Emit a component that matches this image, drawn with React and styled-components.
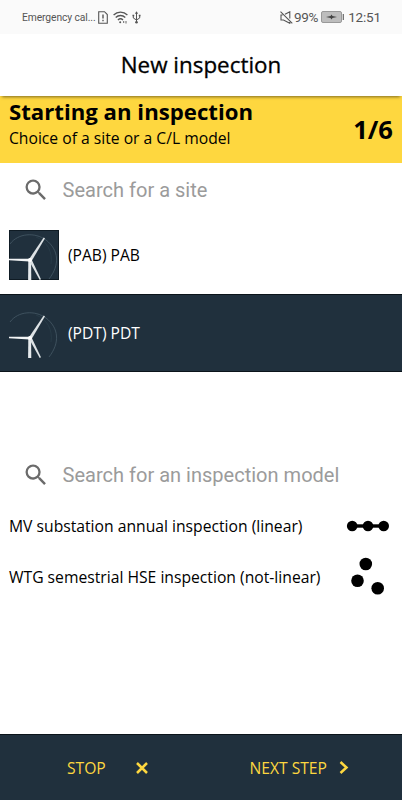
import React from 'react';
import styled, { createGlobalStyle } from 'styled-components';

const sites = [
    { label: '(PAB) PAB', selected: false },
    { label: '(PDT) PDT', selected: true },
];

const SearchIcon = () => (
    <svg width="28" height="28" viewBox="0 0 24 24" fill="#6b6b6b">
        <path d="M15.5 14h-.79l-.28-.27A6.47 6.47 0 0 0 16 9.5 6.5 6.5 0 1 0 9.5 16c1.61 0 3.09-.59 4.23-1.57l.27.28v.79l5 4.99L20.49 19l-4.99-5zm-6 0C7.01 14 5 11.99 5 9.5S7.01 5 9.5 5 14 7.01 14 9.5 11.99 14 9.5 14z" />
    </svg>
);

const Turbine = () => (
    <svg width="50" height="50" viewBox="0 0 50 50">
        <path d="M1 14C9 3 26 2 37 10C50 20 51 35 40 49" fill="none" stroke="#4b5e6b" strokeWidth="0.7" />
        <path d="M27 7C38 11 44 22 42 34" fill="none" stroke="#2c414e" strokeWidth="0.6" />
        <path d="M19.300 31h2.800l.2 19h-3.200z" fill="#e6eaed" />
        <path d="M19.800 29.500L34.700 7.500L36 8.200L22.800 30.800z" fill="#dde2e5" />
        <path d="M21 28.700L0 28.800V30.200L20.500 31.500z" fill="#f2f4f5" />
        <path d="M20.200 31L22.600 29.500L32 49.200L30.700 50z" fill="#dde2e5" />
        <circle cx="21" cy="30" r="2" fill="#fff" />
    </svg>
);

const App = () => {
    return (
        <Screen>
            <GlobalStyle />
            <StatusBar>
                <Carrier>Emergency cal...</Carrier>
                <StatusIcons>
                    <svg width="10" height="13" viewBox="0 0 10 13" fill="none" stroke="#555" strokeWidth="1.1">
                        <path d="M.7.700H6.500L9.300 3.500V12.200H.7z" />
                        <path d="M5 3.500V7.600M5 8.800V10.200" strokeWidth="1.4" />
                    </svg>
                    <svg width="15" height="13" viewBox="0 0 15 13" fill="none" stroke="#555" strokeWidth="1.3">
                        <path d="M.6 4C4.500.2 10.500.2 14.400 4M2.700 6.500C5.500 3.800 9.500 3.800 12.300 6.500M4.900 8.900C6.500 7.500 8.500 7.500 10 8.900" />
                        <circle cx="7.200" cy="11.300" r="1" fill="#555" stroke="none" />
                        <path d="M10.700 10V12M13 10V12.500" strokeWidth="0.9" />
                    </svg>
                    <svg width="9" height="13" viewBox="0 0 9 13" fill="none" stroke="#555" strokeWidth="1">
                        <path d="M4.500 2V11M1.300 4.500V7L4.500 9L7.700 7V4.500" />
                        <path d="M2.900 2.700L4.500.3L6.100 2.700z" fill="#555" stroke="none" />
                        <circle cx="4.500" cy="11.300" r="1.300" fill="#555" stroke="none" />
                        <path d="M.5 4.500H2.200M6.800 4.500H8.500" strokeWidth="1.500" />
                    </svg>
                </StatusIcons>
                <StatusRight>
                    <svg width="13" height="13" viewBox="0 0 13 13" fill="none" stroke="#555" strokeWidth="1.1">
                        <path d="M2.600 4H1V9H3.500L9.800 12.300V9.800M5 3.300L9.800.8V7.500M.5.700L12.300 12.400" />
                    </svg>
                    <Percent>99%</Percent>
                    <svg width="23" height="12" viewBox="0 0 23 12">
                        <rect x=".5" y=".5" width="20" height="11" rx="1.500" fill="#bdbdbd" stroke="#999" />
                        <path d="M22.300 3V9" stroke="#666" strokeWidth="1.200" />
                        <path d="M5 6L9.500 5L10.500 3.500L11.500 5L16 6L11.500 7L10.500 8.500L9.500 7z" fill="#444" />
                    </svg>
                    <Clock>12:51</Clock>
                </StatusRight>
            </StatusBar>
            <Header>New inspection</Header>
            <StepBanner>
                <div>
                    <h2>Starting an inspection</h2>
                    <p>Choice of a site or a C/L model</p>
                </div>
                <Progress>1/6</Progress>
            </StepBanner>
            <Search>
                <SearchIcon />
                <input placeholder="Search for a site" />
            </Search>
            <SiteList>
                {sites.map((site) => (
                    <Site key={site.label} $selected={site.selected}>
                        <Thumb $selected={site.selected}><Turbine /></Thumb>
                        <span>{site.label}</span>
                    </Site>
                ))}
            </SiteList>
            <Search $compact>
                <SearchIcon />
                <input placeholder="Search for an inspection model" />
            </Search>
            <Model>
                <span>MV substation annual inspection (linear)</span>
                <svg width="44" height="40" viewBox="0 0 44 40">
                    <path d="M6 20H38" stroke="#000" strokeWidth="3.4" />
                    <circle cx="6.200" cy="20" r="5.300" />
                    <circle cx="22" cy="20" r="5.300" />
                    <circle cx="37.700" cy="20" r="5.300" />
                </svg>
            </Model>
            <Model>
                <span>WTG semestrial HSE inspection (not-linear)</span>
                <svg width="44" height="40" viewBox="0 0 44 40">
                    <circle cx="19.800" cy="7" r="6.300" />
                    <circle cx="11.500" cy="23.800" r="6.300" />
                    <circle cx="31.700" cy="31.300" r="6.300" />
                </svg>
            </Model>
            <Footer>
                <StopButton>
                    STOP
                    <svg width="12" height="12" viewBox="0 0 12 12" stroke="#fdd73f" strokeWidth="2.500">
                        <path d="M1 1L11 11M11 1L1 11" />
                    </svg>
                </StopButton>
                <NextButton>
                    NEXT STEP
                    <svg width="10" height="13" viewBox="0 0 10 13" fill="none" stroke="#fdd73f" strokeWidth="2.500">
                        <path d="M1.500 1L7.500 6.500L1.500 12" />
                    </svg>
                </NextButton>
            </Footer>
        </Screen>
    );
};

const GlobalStyle = createGlobalStyle`
  * { box-sizing: border-box; }
  body { margin: 0; background: #fff; }
  svg { flex-shrink: 0; display: block; }
`
const Screen = styled.div`
  width: 402px;
  height: 800px;
  display: flex;
  flex-direction: column;
  overflow: hidden;
  background: #fff;
  color: #000;
  font-family: 'Open Sans', 'Noto Sans', sans-serif;
`
const StatusBar = styled.div`
  height: 34px;
  flex-shrink: 0;
  display: flex;
  align-items: center;
  padding: 0 21px 0 22px;
  background: #fafafa;
  color: #555;
  font-family: Roboto, sans-serif;
`
const Carrier = styled.span`
  width: 76px;
  font-size: 10.3px;
  letter-spacing: -0.1px;
  white-space: nowrap;
`
const StatusIcons = styled.div`
  display: flex;
  align-items: center;
  gap: 4.5px;
`
const StatusRight = styled.div`
  display: flex;
  align-items: center;
  margin-left: auto;
`
const Percent = styled.span`
  margin: 0 3px 0 1px;
  font-size: 13.5px;
  letter-spacing: -0.3px;
`
const Clock = styled.span`
  margin-left: 4px;
  font-size: 13.5px;
  letter-spacing: -0.15px;
`
const Header = styled.header`
  height: 62px;
  flex-shrink: 0;
  display: flex;
  justify-content: center;
  align-items: center;
  padding-bottom: 1px;
  font-size: 22.4px;
  -webkit-text-stroke: 0.3px #000;
  box-shadow: 0 3px 3px -2px rgba(0,0,0,0.5);
  z-index: 1;
`
const StepBanner = styled.div`
  height: 67px;
  flex-shrink: 0;
  display: flex;
  justify-content: space-between;
  padding: 0 9px;
  background: #fed73f;
  h2 {
    margin: 1px 0 0;
    font-size: 22.2px;
    line-height: 30px;
    font-weight: 700;
  }
  p {
    margin: 1px 0 0;
    font-size: 15.68px;
    line-height: 20px;
  }
`
const Progress = styled.span`
  align-self: center;
  font-size: 25.6px;
  font-weight: 700;
`
const Search = styled.div`
  height: ${(props) => (props.$compact ? '51px' : '53px')};
  flex-shrink: 0;
  display: flex;
  align-items: center;
  padding: 1px 0 0 22px;
  input {
    flex: 1;
    margin-left: 12.5px;
    padding: 0;
    border: none;
    outline: none;
    background: transparent;
    font-family: Roboto, sans-serif;
    font-size: 20.05px;
  }
  input::placeholder {
    color: #9b9b9b;
  }
`
const SiteList = styled.div`
  height: 233px;
  flex-shrink: 0;
`
const Site = styled.div`
  height: 78px;
  display: flex;
  align-items: center;
  gap: 9px;
  padding-left: 9px;
  font-size: 15.6px;
  border-top: 1px solid ${(props) => (props.$selected ? '#0b141a' : 'transparent')};
  border-bottom: 1px solid ${(props) => (props.$selected ? '#0b141a' : 'transparent')};
  background: ${(props) => (props.$selected ? '#20303d' : '#fff')};
  color: ${(props) => (props.$selected ? '#fff' : '#000')};
`
const Thumb = styled.div`
  width: 50px;
  height: 50px;
  background: #20303d;
  box-shadow: ${(props) => (props.$selected ? 'none' : 'inset 0 0 0 1px #0f1b24')};
`
const Model = styled.div`
  height: 51px;
  flex-shrink: 0;
  display: flex;
  justify-content: space-between;
  align-items: center;
  padding: 0 12px 0 9px;
  font-size: 15.7px;
  white-space: nowrap;
`
const Footer = styled.footer`
  height: 66px;
  flex-shrink: 0;
  display: flex;
  margin-top: auto;
  border-top: 1px solid #0b141a;
  background: #20303d;
`
const FooterButton = styled.button`
  width: 50%;
  display: flex;
  align-items: center;
  padding: 0;
  border: none;
  background: transparent;
  color: #fdd73f;
  font-family: inherit;
  font-size: 15.65px;
  white-space: nowrap;
`
const StopButton = styled(FooterButton)`
  padding-left: 67px;
  gap: 30.5px;
`
const NextButton = styled(FooterButton)`
  padding-left: 48.5px;
  gap: 12.5px;
`
export default App;
